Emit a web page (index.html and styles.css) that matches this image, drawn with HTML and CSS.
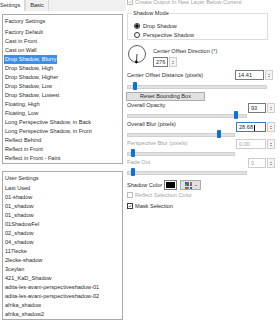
FILE: index.html
```html
<!DOCTYPE html>
<html lang="en">
<head>
  <meta charset="UTF-8">
  <title>Drop Shadow</title>
  <link rel="stylesheet" href="styles.css">
</head>
<body>

<div class="dialog">

  <div class="presets">
    <div class="tabs">
      <span class="tab active">Settings</span>
      <span class="tab">Basic</span>
    </div>

    <div class="list factory">
      <div class="list-head">Factory Settings</div>
      <ul>
        <li><span>Factory Default</span></li>
        <li><span>Cast in Front</span></li>
        <li><span>Cast on Wall</span></li>
        <li class="selected"><span>Drop Shadow, Blurry</span></li>
        <li><span>Drop Shadow, High</span></li>
        <li><span>Drop Shadow, Higher</span></li>
        <li><span>Drop Shadow, Low</span></li>
        <li><span>Drop Shadow, Lowest</span></li>
        <li><span>Floating, High</span></li>
        <li><span>Floating, Low</span></li>
        <li><span>Long Perspective Shadow, in Back</span></li>
        <li><span>Long Perspective Shadow, in Front</span></li>
        <li><span>Reflect Behind</span></li>
        <li><span>Reflect in Front</span></li>
        <li><span>Reflect in Front - Faint</span></li>
      </ul>
    </div>

    <div class="list user">
      <div class="list-head">User Settings</div>
      <ul>
        <li><span>Last Used</span></li>
        <li><span>01-shadow</span></li>
        <li><span>01_shadow</span></li>
        <li><span>01_shadow</span></li>
        <li><span>01ShadowFel</span></li>
        <li><span>02_shadow</span></li>
        <li><span>04_shadow</span></li>
        <li><span>117lecke</span></li>
        <li><span>2lecke-shadow</span></li>
        <li><span>3ceylan</span></li>
        <li><span>421_KaD_Shadow</span></li>
        <li><span>adita-les-avani-perspectiveshadow-01</span></li>
        <li><span>adita-les-avani-perspectiveshadow-02</span></li>
        <li><span>afrika_shadow</span></li>
        <li><span>afrika_shadow2</span></li>
      </ul>
    </div>
  </div>

  <div class="controls">
    <label class="check disabled top-check">
      <span class="box"><svg viewBox="0 0 6 6"><polyline points="1,3 2.5,4.5 5,1.5"/></svg></span>
      Create Output In New Layer Below Current
    </label>

    <fieldset class="group">
      <legend>Shadow Mode</legend>
      <label class="radio"><span class="dot on"></span>Drop Shadow</label>
      <label class="radio"><span class="dot"></span>Perspective Shadow</label>
    </fieldset>

    <div class="direction">
      <svg class="dial" viewBox="0 0 22 26">
        <circle cx="10" cy="13" r="8.5"/>
        <line x1="10" y1="13" x2="9.4" y2="21"/>
        <circle class="knob" cx="9.4" cy="21" r="1.4"/>
      </svg>
      <div class="direction-side">
        <div class="caption">Center Offset Direction (°)</div>
        <div class="spin narrow"><span class="field">276</span><span class="arrows"><i class="up"></i><i class="down"></i></span></div>
      </div>
    </div>

    <div class="ctl distance">
      <div class="caption">Center Offset Distance (pixels)</div>
      <div class="spin wide"><span class="field">14.41</span><span class="arrows"><i class="up"></i><i class="down"></i></span></div>
      <div class="slider"><span class="thumb" style="left: 3%"></span></div>
    </div>

    <button class="btn" type="button">Reset Bounding Box</button>

    <div class="ctl">
      <div class="caption">Overall Opacity</div>
      <div class="spin short"><span class="field">93</span><span class="arrows"><i class="up"></i><i class="down"></i></span></div>
      <div class="slider"><span class="thumb" style="left: 92%"></span></div>
    </div>

    <div class="ctl">
      <div class="caption">Overall Blur (pixels)</div>
      <div class="spin wide focus"><span class="field">28.68<span class="caret"></span></span><span class="arrows"><i class="up"></i><i class="down"></i></span></div>
      <div class="slider"><span class="thumb" style="left: 86%"></span></div>
    </div>

    <div class="ctl off">
      <div class="caption">Perspective Blur (pixels)</div>
      <div class="spin wide"><span class="field">0.00</span><span class="arrows"><i class="up"></i><i class="down"></i></span></div>
      <div class="slider"><span class="thumb" style="left: 2%"></span></div>
    </div>

    <div class="ctl off">
      <div class="caption">Fade Out</div>
      <div class="spin short"><span class="field">0</span><span class="arrows"><i class="up"></i><i class="down"></i></span></div>
      <div class="slider"><span class="thumb" style="left: 2%"></span></div>
    </div>

    <div class="color-row">
      <span>Shadow Color</span>
      <span class="swatch"></span>
      <span class="picker">
        <span class="grid">
          <i class="b"></i><i class="r"></i><i class="g"></i>
          <i class="g"></i><i class="b"></i><i class="r"></i>
          <i class="r"></i><i class="g"></i><i class="b"></i>
        </span>
        <span class="drop"></span>
      </span>
    </div>

    <label class="check disabled"><span class="box"></span>Reflect Selection Color</label>
    <label class="check mask">
      <span class="box"><svg viewBox="0 0 6 6"><polyline points="1,3 2.5,4.5 5,1.5"/></svg></span>
      Mask Selection
    </label>
  </div>

</div>

</body>
</html>
```

FILE: styles.css
```css
* {
  box-sizing: border-box;
}

body {
  margin: 0;
  width: 280px;
  height: 320px;
  overflow: hidden;
  background: #fff;
  font-family: "Liberation Sans", Arial, sans-serif;
  font-size: 5.6px;
  color: #2b2b2b;
}

.dialog {
  display: flex;
  height: 320px;
}

/* left side: preset lists */

.presets {
  width: 126px;
  display: flex;
  flex-direction: column;
  overflow: hidden;
}

.tabs {
  display: flex;
  height: 11px;
  background: #f0f0f0;
}

.tab {
  padding: 0 4px;
  line-height: 11px;
  border: 1px solid #d9d9d9;
  border-bottom: none;
  border-top: none;
}

.tab.active {
  background: #fff;
  margin-left: -5px;
}

.list {
  margin: 3px 3px 0 2px;
  border: 1px solid #a9a9a9;
  padding: 2px 2px 0;
  overflow: hidden;
}

.list.factory {
  height: 150px;
  flex: none;
}

.list.user {
  margin-top: 7px;
  flex: 1;
}

.list-head {
  line-height: 9px;
}

.list ul {
  list-style: none;
  margin: 2px 0 0;
  padding: 0;
}

.list.user ul {
  margin-top: 1px;
}

.list li {
  line-height: 9px;
  white-space: nowrap;
}

.list li span {
  display: inline-block;
  padding: 0 1px;
  margin-left: -1px;
}

.list li.selected span {
  background: #3d8ee8;
  color: #fff;
}

/* right side: controls */

.controls {
  flex: 1;
  padding: 0 5px 0 1px;
  display: flex;
  flex-direction: column;
}

.check {
  display: flex;
  align-items: center;
  gap: 2px;
  height: 10px;
}

.check.disabled {
  color: #a3a3a3;
}

.top-check {
  margin-top: -3px;
  height: 9px;
}

.box {
  width: 6px;
  height: 6px;
  border: 1px solid #3c3c3c;
  background: #fff;
  display: inline-block;
  flex: none;
}

.check.disabled .box {
  border-color: #bcbcbc;
}

.box svg {
  display: block;
  width: 4px;
  height: 4px;
}

.box polyline {
  fill: none;
  stroke: #333;
  stroke-width: 1;
}

.check.disabled .box polyline {
  stroke: #a0a0a0;
}

.mask {
  margin-top: 1px;
}

.group {
  margin: 3px 7px 0 0;
  padding: 4px 0 0 6px;
  border: 1px solid #dcdcdc;
  min-width: 0;
  height: 31px;
}

.group legend {
  padding: 0 1px;
  margin-left: -2px;
  line-height: 8px;
}

.radio {
  display: flex;
  align-items: center;
  gap: 3px;
  height: 9px;
}

.dot {
  width: 6px;
  height: 6px;
  border: 1px solid #333;
  border-radius: 50%;
  background: #fff;
  display: inline-block;
}

.dot.on {
  background: radial-gradient(circle, #111 0 1.5px, #fff 1.8px);
}

.direction {
  display: flex;
  gap: 4px;
  height: 29px;
  margin-top: 1px;
}

.dial {
  width: 22px;
  height: 26px;
}

.dial circle {
  fill: #fff;
  stroke: #333;
  stroke-width: 0.8;
}

.dial line {
  stroke: #111;
  stroke-width: 0.8;
}

.dial .knob {
  fill: #111;
  stroke: none;
}

.direction-side {
  padding-top: 6px;
}

.caption {
  line-height: 9px;
  white-space: nowrap;
}

/* spin boxes */

.spin {
  display: flex;
  height: 10px;
}

.spin .field {
  flex: 1;
  border: 1px solid #7a7a7a;
  line-height: 8px;
  padding-left: 2px;
  background: #fff;
  white-space: nowrap;
}

.spin .arrows {
  width: 8px;
  margin-left: 1px;
  border: 1px solid #cfcfcf;
  background: #f4f4f4;
  display: flex;
  flex-direction: column;
  align-items: center;
  justify-content: center;
  gap: 1px;
}

.spin .arrows i {
  width: 0;
  height: 0;
  border-left: 1.5px solid transparent;
  border-right: 1.5px solid transparent;
}

.spin .arrows .up {
  border-bottom: 1.5px solid #555;
}

.spin .arrows .down {
  border-top: 1.5px solid #555;
}

.spin.narrow {
  width: 24px;
  margin-top: 1px;
}

.spin.wide {
  width: 39px;
}

.spin.short {
  width: 27px;
}

.spin.focus .field {
  border-color: #2f7bd0;
}

.caret {
  display: inline-block;
  width: 1px;
  height: 6px;
  background: #000;
  vertical-align: middle;
  margin-left: 1px;
}

/* slider blocks */

.ctl {
  display: grid;
  grid-template-columns: 1fr auto;
  grid-template-rows: 9px 10px;
  column-gap: 3px;
}

.ctl .caption {
  grid-column: 1;
  grid-row: 1;
}

.ctl .spin {
  grid-column: 2;
  grid-row: 1 / 3;
  align-self: start;
  margin-top: 2px;
}

.ctl .slider {
  grid-column: 1;
  grid-row: 2;
}

.ctl.off .caption,
.ctl.off .field {
  color: #a3a3a3;
}

.ctl.off .field {
  border-color: #cccccc;
}

.ctl.off .spin {
  margin-top: 0;
}

.ctl.distance {
  grid-template-rows: 10px 11px;
}

.ctl.distance .caption {
  align-self: center;
}

.ctl.distance .spin {
  grid-row: 1;
  margin: 0 2px 0 0;
  width: 38px;
}

.ctl.distance .slider {
  grid-column: 1 / 3;
  margin-right: 10px;
}

.slider {
  position: relative;
  margin-left: 4px;
}

.slider::before {
  content: "";
  position: absolute;
  left: -4px;
  right: -2px;
  top: 50%;
  height: 2px;
  margin-top: -1px;
  background: #e2e2e2;
  border: 0.5px solid #d0d0d0;
}

.thumb {
  position: absolute;
  top: 50%;
  width: 4px;
  height: 8px;
  margin: -4px 0 0 -2px;
  background: #0a74d6;
  border-radius: 1px;
}

.btn {
  margin: 1px 0 0 -1px;
  width: 79px;
  height: 9px;
  padding: 0;
  font: inherit;
  color: #2b2b2b;
  background: #e1e1e1;
  border: 1px solid #adadad;
  line-height: 7px;
}

.color-row {
  display: flex;
  align-items: center;
  gap: 2px;
  height: 10px;
  margin-top: 3px;
}

.swatch {
  width: 13px;
  height: 10px;
  border: 1px solid #7a7a7a;
  background: #000;
  box-shadow: inset 0 0 0 1px #fff;
}

.picker {
  width: 21px;
  height: 10px;
  margin-left: 1px;
  background: #e1e1e1;
  border: 1px solid #adadad;
  display: flex;
  align-items: center;
  justify-content: center;
  gap: 3px;
}

.grid {
  display: grid;
  grid-template-columns: repeat(3, 2px);
  gap: 0.5px;
}

.grid i {
  width: 2px;
  height: 2px;
}

.grid .r { background: #e23b3b; }
.grid .g { background: #2fae3c; }
.grid .b { background: #2c5fe0; }

.drop {
  width: 0;
  height: 0;
  border-left: 1.5px solid transparent;
  border-right: 1.5px solid transparent;
  border-top: 1.5px solid #444;
}
```
